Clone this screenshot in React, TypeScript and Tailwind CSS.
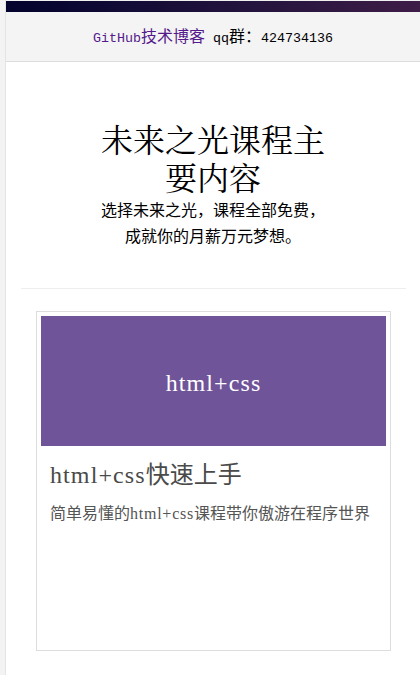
import React from "react";

const mono = "font-['Liberation_Mono',monospace]";
const serif = "font-['Liberation_Serif',serif]";

export default function App() {
  return (
    <div className="flex min-h-[675px] w-full bg-white">
      <div className="w-[6px] shrink-0 bg-[#f3f3f3] border-r border-[#e4e4e4]" />
      <div className="flex-1 flex flex-col bg-white font-['Noto_Sans_CJK_SC',sans-serif]">
        <div className="h-[12px] border-t border-[#f0f0f0] bg-gradient-to-r from-[#03032e] to-[#3e1d47]" />
        <div className="h-[50px] bg-[#f4f4f4] border-b border-[#dddddd] flex items-center justify-center text-[16px] leading-[20px]">
          <a className="text-[#551a8b]">
            <span className={`${mono} text-[13.33px]`}>GitHub</span>技术博客
          </a>
          <span className="text-black">
            <span className={`${mono} text-[13.33px]`}>&nbsp;qq</span>群：
            <span className={`${mono} text-[13.33px]`}>424734136</span>
          </span>
        </div>

        <div className="flex flex-col items-center pt-[57px]">
          <div className="w-[232px] text-center">
            <h1 className="text-[32px] leading-[38px] text-black font-['Noto_Serif_CJK_SC','Noto_Sans_CJK_SC',serif]">
              未来之光课程主要内容
            </h1>
            <p className="mt-[1px] text-[16px] leading-[26px] text-black">
              选择未来之光，课程全部免费，成就你的月薪万元梦想。
            </p>
          </div>
        </div>

        <div className="mt-[40px] ml-[15px] mr-[14px] h-px bg-[#eeeeee]" />

        <div className="mt-[22px] ml-[30px] mr-[29px] h-[340px] border border-[#dddddd] p-[4px]">
          <div className="h-[130px] bg-[#6f5499] flex items-center justify-center">
            <span className={`${serif} text-[24px] tracking-[1.1px] text-white leading-[30px] mt-[4px]`}>html+css</span>
          </div>
          <div className="pl-[9px] pt-[11px]">
            <h3 className="text-[24px] leading-[32px] text-[#4a4a4a]">
              <span className={`${serif} tracking-[1.1px]`}>html+css</span>快速上手
            </h3>
            <p className="mt-[9px] text-[16px] leading-[24px] text-[#555555]">
              简单易懂的<span className={`${serif} tracking-[0.75px]`}>html+css</span>课程带你傲游在程序世界
            </p>
          </div>
        </div>
        <div className="flex-1" />
      </div>
    </div>
  );
}
